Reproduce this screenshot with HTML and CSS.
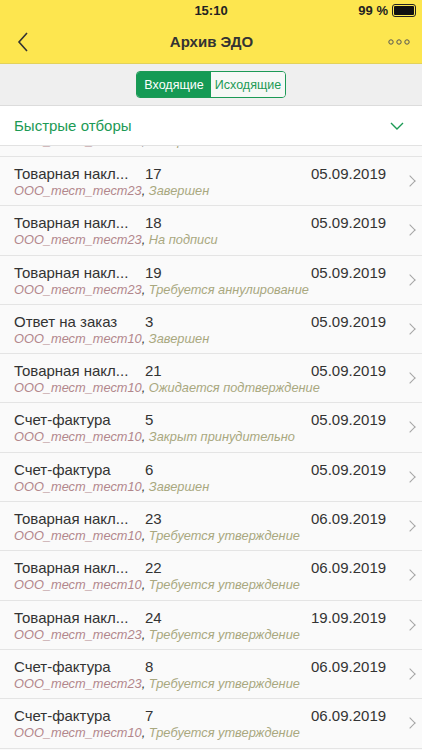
FILE: index.html
```html
<!DOCTYPE html>
<html lang="ru">
<head>
    <meta charset="UTF-8">
    <meta name="viewport" content="width=device-width, initial-scale=1.0">
    <title>Архив ЭДО</title>
    <link rel="stylesheet" href="styles.css">
</head>
<body>
    <div class="header">
        <div class="status">
            <span class="status-time">15:10</span>
            <span class="status-right">99 %
                <span class="battery"><span class="battery-fill"></span></span>
            </span>
        </div>
        <div class="nav">
            <svg class="back" width="12" height="20" viewBox="0 0 12 20">
                <path d="M10 1 L2 10 L10 19" fill="none" stroke="#333" stroke-width="1.6"/>
            </svg>
            <div class="title">Архив ЭДО</div>
            <svg class="more" width="22" height="6" viewBox="0 0 22 6">
                <circle cx="3" cy="3" r="2.2" fill="none" stroke="#555" stroke-width="1"/>
                <circle cx="11" cy="3" r="2.2" fill="none" stroke="#555" stroke-width="1"/>
                <circle cx="19" cy="3" r="2.2" fill="none" stroke="#555" stroke-width="1"/>
            </svg>
        </div>
    </div>

    <div class="tabs">
        <div class="segment">
            <span class="seg active">Входящие</span>
            <span class="seg">Исходящие</span>
        </div>
    </div>

    <div class="filters">
        <span>Быстрые отборы</span>
        <svg width="14" height="8" viewBox="0 0 14 8">
            <path d="M1 1 L7 7 L13 1" fill="none" stroke="#1c9a55" stroke-width="1.4"/>
        </svg>
    </div>

    <div class="list">
        <div class="row cut">
            <div class="sub"><span class="org">ООО_тест_тест23</span>, <span class="state">Завершен</span></div>
        </div>
        <div class="row">
            <div class="line"><span class="kind">Товарная накл...</span><span class="num">17</span><span class="date">05.09.2019</span></div>
            <div class="sub"><span class="org">ООО_тест_тест23</span>, <span class="state">Завершен</span></div>
        </div>
        <div class="row">
            <div class="line"><span class="kind">Товарная накл...</span><span class="num">18</span><span class="date">05.09.2019</span></div>
            <div class="sub"><span class="org">ООО_тест_тест23</span>, <span class="state">На подписи</span></div>
        </div>
        <div class="row">
            <div class="line"><span class="kind">Товарная накл...</span><span class="num">19</span><span class="date">05.09.2019</span></div>
            <div class="sub"><span class="org">ООО_тест_тест23</span>, <span class="state">Требуется аннулирование</span></div>
        </div>
        <div class="row">
            <div class="line"><span class="kind">Ответ на заказ</span><span class="num">3</span><span class="date">05.09.2019</span></div>
            <div class="sub"><span class="org">ООО_тест_тест10</span>, <span class="state">Завершен</span></div>
        </div>
        <div class="row">
            <div class="line"><span class="kind">Товарная накл...</span><span class="num">21</span><span class="date">05.09.2019</span></div>
            <div class="sub"><span class="org">ООО_тест_тест10</span>, <span class="state">Ожидается подтверждение</span></div>
        </div>
        <div class="row">
            <div class="line"><span class="kind">Счет-фактура</span><span class="num">5</span><span class="date">05.09.2019</span></div>
            <div class="sub"><span class="org">ООО_тест_тест10</span>, <span class="state">Закрыт принудительно</span></div>
        </div>
        <div class="row">
            <div class="line"><span class="kind">Счет-фактура</span><span class="num">6</span><span class="date">05.09.2019</span></div>
            <div class="sub"><span class="org">ООО_тест_тест10</span>, <span class="state">Завершен</span></div>
        </div>
        <div class="row">
            <div class="line"><span class="kind">Товарная накл...</span><span class="num">23</span><span class="date">06.09.2019</span></div>
            <div class="sub"><span class="org">ООО_тест_тест10</span>, <span class="state">Требуется утверждение</span></div>
        </div>
        <div class="row">
            <div class="line"><span class="kind">Товарная накл...</span><span class="num">22</span><span class="date">06.09.2019</span></div>
            <div class="sub"><span class="org">ООО_тест_тест10</span>, <span class="state">Требуется утверждение</span></div>
        </div>
        <div class="row">
            <div class="line"><span class="kind">Товарная накл...</span><span class="num">24</span><span class="date">19.09.2019</span></div>
            <div class="sub"><span class="org">ООО_тест_тест23</span>, <span class="state">Требуется утверждение</span></div>
        </div>
        <div class="row">
            <div class="line"><span class="kind">Счет-фактура</span><span class="num">8</span><span class="date">06.09.2019</span></div>
            <div class="sub"><span class="org">ООО_тест_тест23</span>, <span class="state">Требуется утверждение</span></div>
        </div>
        <div class="row">
            <div class="line"><span class="kind">Счет-фактура</span><span class="num">7</span><span class="date">06.09.2019</span></div>
            <div class="sub"><span class="org">ООО_тест_тест10</span>, <span class="state">Требуется утверждение</span></div>
        </div>
    </div>
</body>
</html>
```

FILE: styles.css
```css
body {
    margin: 0;
    font-family: "Liberation Sans", Arial, sans-serif;
    background: #fafafa;
    color: #333;
    height: 750px;
    overflow: hidden;
}
.header {
    background: #fde64f;
    border-bottom: 1px solid #e3d25a;
}
.status {
    height: 20px;
    display: flex;
    justify-content: center;
    align-items: center;
    position: relative;
    font-size: 13px;
    font-weight: bold;
    color: #222;
}
.status-right {
    position: absolute;
    right: 6px;
    top: 3px;
    display: flex;
    align-items: center;
    gap: 4px;
}
.battery {
    width: 20px;
    height: 9px;
    border: 1px solid #222;
    border-radius: 3px;
    padding: 1px;
    display: flex;
}
.battery-fill {
    flex: 1;
    background: #111;
    border-radius: 1px;
}
.nav {
    height: 43px;
    display: flex;
    align-items: center;
    justify-content: space-between;
    padding: 0 12px 0 17px;
}
.title {
    font-size: 15px;
    font-weight: bold;
    color: #333;
    margin-left: 6px;
}
.tabs {
    background: #efefef;
    height: 41px;
    display: flex;
    justify-content: center;
    align-items: center;
    border-bottom: 1px solid #dcdcdc;
}
.segment {
    display: flex;
    border: 1px solid #1c9a55;
    border-radius: 4px;
    overflow: hidden;
    font-size: 12.5px;
    height: 25px;
}
.seg {
    display: flex;
    align-items: center;
    justify-content: center;
    width: 74px;
    color: #1c9a55;
    background: #f6f8f6;
}
.seg.active {
    background: #159a55;
    color: #fff;
}
.filters {
    height: 39px;
    background: #fff;
    display: flex;
    justify-content: space-between;
    align-items: center;
    padding: 0 18px 0 14px;
    color: #1c9a55;
    font-size: 15px;
    border-bottom: 1px solid #e2e2e2;
}
.row {
    height: 49.3px;
    border-bottom: 1px solid #e4e4e4;
    padding: 8px 0 0 14px;
    box-sizing: border-box;
    position: relative;
    background: #fafafa;
}
.row::after {
    content: "";
    position: absolute;
    right: 8px;
    top: 20px;
    width: 7px;
    height: 7px;
    border-right: 1.3px solid #a5a5a5;
    border-top: 1.3px solid #a5a5a5;
    transform: rotate(45deg);
}
.row.cut {
    height: 11px;
    padding: 0 0 0 14px;
    overflow: hidden;
}
.row.cut::after {
    display: none;
}
.row.cut .sub {
    margin-top: -13px;
}
.line {
    display: flex;
    font-size: 15px;
    color: #333;
    line-height: 18px;
}
.kind {
    width: 131px;
}
.num {
    width: 166px;
}
.sub {
    font-size: 12.8px;
    font-style: italic;
    line-height: 16px;
}
.org {
    color: #b2878c;
}
.state {
    color: #a9a87f;
}
```
